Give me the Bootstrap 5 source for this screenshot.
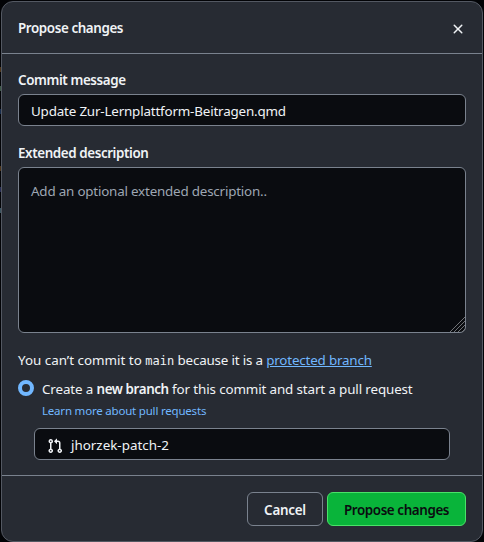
<!DOCTYPE html>
<html lang="en" data-bs-theme="dark">
<head>
<meta charset="utf-8">
<meta name="viewport" content="width=device-width, initial-scale=1">
<title>Propose changes</title>
<link href="https://cdn.jsdelivr.net/npm/bootstrap@5.3.0/dist/css/bootstrap.min.css" rel="stylesheet">
<style>
  body { background: #020306; color: #f0f3f6; font: 13.4px/20px "Noto Sans", "Open Sans", sans-serif; letter-spacing: -.18px; height: 542px; overflow: hidden; }
  .page-bits { position: absolute; left: 0; top: 0; width: 1px; height: 542px; }
  .page-bits i { position: absolute; left: 0; width: 1px; height: 5px; }
  .dialog-box { position: relative; margin: 1px 1px 0 1px; height: 541px; background: #272b33; border: 1px solid #535862; border-radius: 12px; }
  .dialog-head { height: 52px; border-bottom: 1px solid #7a828e; padding: 0 16px; }
  .dialog-main { height: 421px; padding: 16px 16px 0; }
  .dialog-foot { height: 66px; border-top: 1px solid #7a828e; padding: 16px 16px 0; gap: 4px; }
  .strong { font-weight: 600; letter-spacing: -.4px; }
  .field { background: #0a0c10; border: 1px solid #7a828e; border-radius: 6px; color: #f0f3f6; font-size: 13.4px; line-height: 20px; padding: 6px 12px 4px; height: 32px; letter-spacing: inherit; }
  .field:focus { background: #0a0c10; color: #f0f3f6; }
  textarea.field { height: 166px; padding-top: 13px; resize: none; }
  textarea.field::placeholder { color: #9ea7b3; opacity: 1; letter-spacing: -.2px; }
  .grip { position: absolute; right: 1px; bottom: 1px; }
  .code { font: 12px "DejaVu Sans Mono", monospace; letter-spacing: 0; }
  .blue { color: #71b7ff; }
  .learn { font-size: 11.5px; line-height: 18px; text-decoration: none; letter-spacing: -.2px; margin-top: 3px; }
  .radio-on { appearance: none; width: 16px; height: 16px; border: 4px solid #71b7ff; border-radius: 50%; background: #272b33; margin: 1px 0 0; flex: none; }
  .x-btn { background: none; border: 0; padding: 0; width: 16px; height: 16px; line-height: 0; color: #f0f3f6; margin-top: 2px; }
  .act { height: 34px; padding: 1px 0 0; border-radius: 6px; font-size: 13.4px; line-height: 32px; color: #f0f3f6; border: 1px solid #7a828e; white-space: nowrap; }
  .act-cancel { width: 76px; letter-spacing: -.25px; }
  .act-go { width: 139px; background: #09b43a; border-color: #4ae168; color: #0a0c10; }
  .t-ext { margin-top: 17px; }
  .t-note { margin-top: 17px; }
  .t-lead { letter-spacing: 0; }
  .t-row { margin-top: 9px; }
  .t-create { letter-spacing: -.13px; }
  .t-branch { margin-top: 8px; letter-spacing: 0; padding-top: 5px; }
  .t-branch svg { margin-top: 2px; }
</style>
<script src="https://cdn.jsdelivr.net/npm/bootstrap@5.3.0/dist/js/bootstrap.bundle.min.js"></script>
</head>
<body>
<div class="page-bits">
  <i style="top:67px;background:#4d3519"></i><i style="top:86px;background:#3b5845"></i><i style="top:109px;background:#172c4d"></i>
  <i style="top:166px;background:#4d3519"></i><i style="top:187px;background:#282d55"></i><i style="top:208px;background:#3b5560"></i>
</div>
<div class="dialog-box" role="dialog">
  <div class="dialog-head d-flex align-items-center justify-content-between">
    <span class="strong">Propose changes</span>
    <button class="x-btn" aria-label="Close"><svg width="16" height="16" viewBox="0 0 16 16" fill="currentColor"><path d="M3.72 3.72a.75.75 0 0 1 1.06 0L8 6.94l3.22-3.22a.75.75 0 1 1 1.06 1.06L9.06 8l3.22 3.22a.75.75 0 1 1-1.06 1.06L8 9.06l-3.22 3.22a.75.75 0 0 1-1.06-1.06L6.94 8 3.72 4.78a.75.75 0 0 1 0-1.06Z"/></svg></button>
  </div>
  <div class="dialog-main">
    <label class="strong d-block mb-1" for="msg">Commit message</label>
    <input id="msg" class="form-control field" value="Update Zur-Lernplattform-Beitragen.qmd">
    <label class="strong d-block mb-1 t-ext" for="ext">Extended description</label>
    <div class="position-relative">
      <textarea id="ext" class="form-control field d-block" placeholder="Add an optional extended description.."></textarea>
      <svg class="grip" width="15" height="15" viewBox="0 0 15 15" stroke="#7c7e82" stroke-width=".9"><path d="M0 15 15 0M4 15 15 4M8 15l7-7M12 15l3-3"/></svg>
    </div>
    <div class="t-note"><span class="t-lead">You can’t commit to </span><span class="code">main</span> because it is a <a href="#" class="blue">protected branch</a></div>
    <div class="d-flex gap-2 t-row">
      <input class="radio-on" type="radio" checked aria-label="Create a new branch">
      <div>
        <div class="t-create">Create a <b class="strong">new branch</b> for this commit and start a pull request</div>
        <a href="#" class="blue learn d-block">Learn more about pull requests</a>
      </div>
    </div>
    <div class="field d-flex align-items-center mx-3 t-branch">
      <svg width="16" height="16" viewBox="0 0 16 16" fill="currentColor"><path d="M1.5 3.25a2.25 2.25 0 1 1 3 2.122v5.256a2.251 2.251 0 1 1-1.5 0V5.372A2.25 2.25 0 0 1 1.5 3.25Zm5.677-.177L9.573.677A.25.25 0 0 1 10 .854V2.5h1A2.5 2.5 0 0 1 13.5 5v5.628a2.251 2.251 0 1 1-1.5 0V5a1 1 0 0 0-1-1h-1v1.646a.25.25 0 0 1-.427.177L7.177 3.427a.25.25 0 0 1 0-.354ZM3.75 2.5a.75.75 0 1 0 0 1.5.75.75 0 0 0 0-1.5Zm0 9.5a.75.75 0 1 0 0 1.5.75.75 0 0 0 0-1.5Zm8.25.75a.75.75 0 1 0 1.5 0 .75.75 0 0 0-1.5 0Z"/></svg>
      <span class="ms-2">jhorzek-patch-2</span>
    </div>
  </div>
  <div class="dialog-foot d-flex justify-content-end">
    <button class="btn act act-cancel strong">Cancel</button>
    <button class="btn act act-go strong">Propose changes</button>
  </div>
</div>
</body>
</html>
